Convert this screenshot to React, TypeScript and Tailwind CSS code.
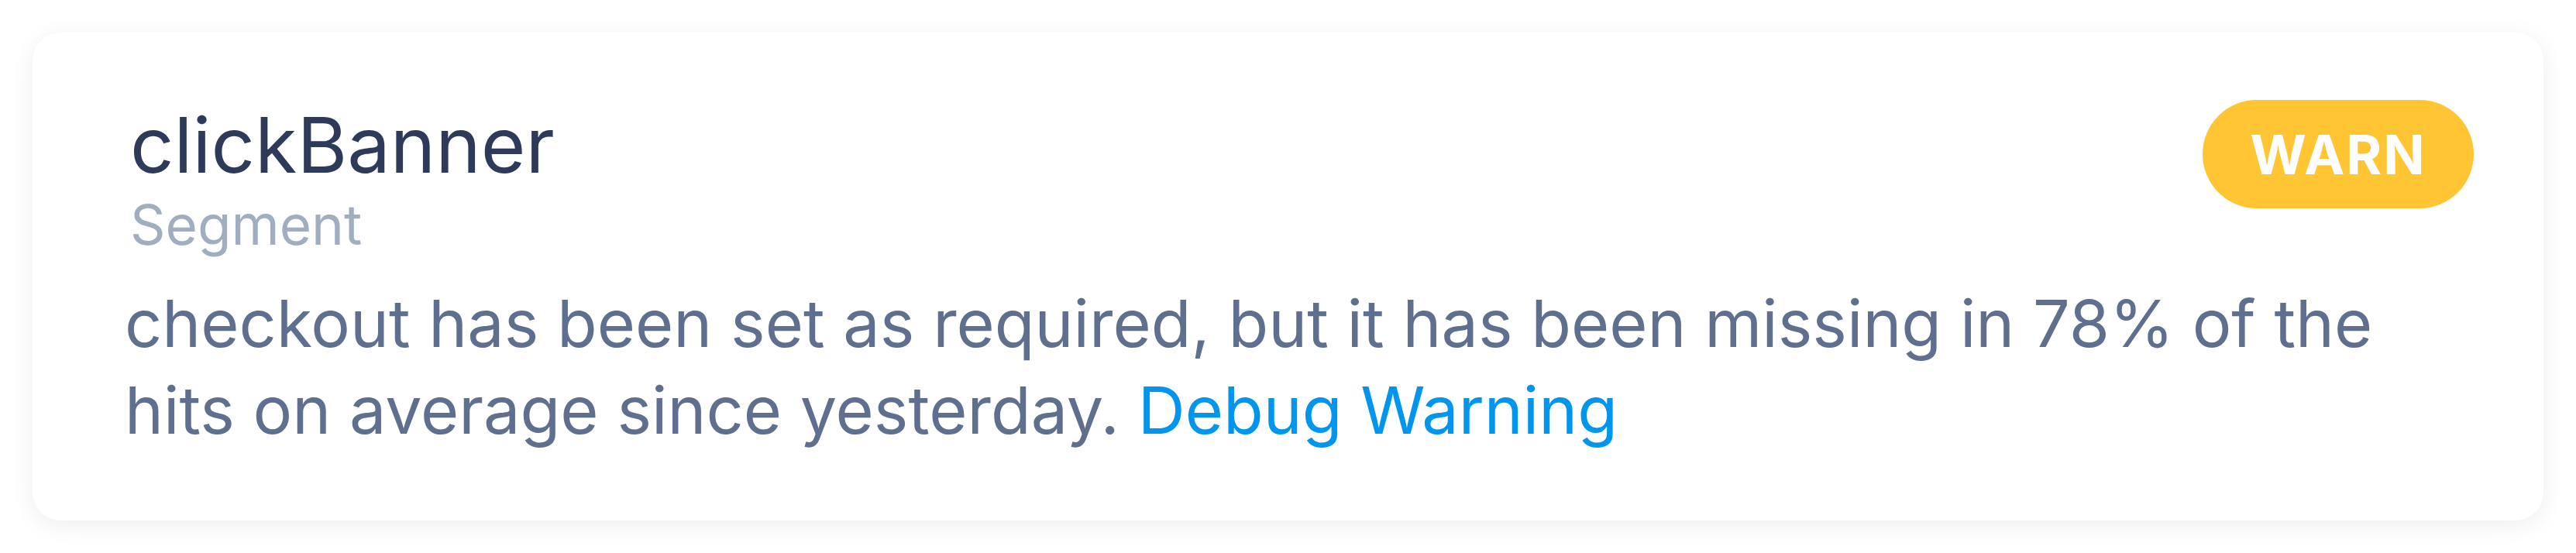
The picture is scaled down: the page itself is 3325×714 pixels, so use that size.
import React from 'react';

type Alert = {
  event: string;
  source: string;
  level: string;
  message: string;
  linkText: string;
};

const alert: Alert = {
  event: 'clickBanner',
  source: 'Segment',
  level: 'WARN',
  message: 'checkout has been set as required, but it has been missing in 78% of the hits on average since yesterday.',
  linkText: 'Debug Warning',
};

const App: React.FC = () => {
  return (
    <div className="min-h-screen bg-white p-[42px] font-['Inter',sans-serif]">
      <div className="h-[630px] rounded-[36px] bg-white pl-[119px] pr-[90px] pt-[86px] shadow-[0_6px_30px_rgba(0,0,0,0.07)]">
        <div className="flex items-start justify-between">
          <div className="pl-[7px]">
            <h1 className="text-[99px] leading-[119px] font-normal text-[#2d3a5a]">{alert.event}</h1>
            <p className="text-[71px] leading-[86px] text-[#a0aec0]">{alert.source}</p>
          </div>
          <span className="mt-[1px] flex h-[140px] w-[350px] items-center justify-center rounded-full bg-[#ffc533] text-[70px] font-bold tracking-[0.03em] text-white">
            {alert.level}
          </span>
        </div>
        <p className="mt-[28px] text-[84.5px] leading-[112px] text-[#5f6f8f]">
          {alert.message}{' '}
          <a href="#" className="text-[#0096ee]">
            {alert.linkText}
          </a>
        </p>
      </div>
    </div>
  );
};

export default App;
